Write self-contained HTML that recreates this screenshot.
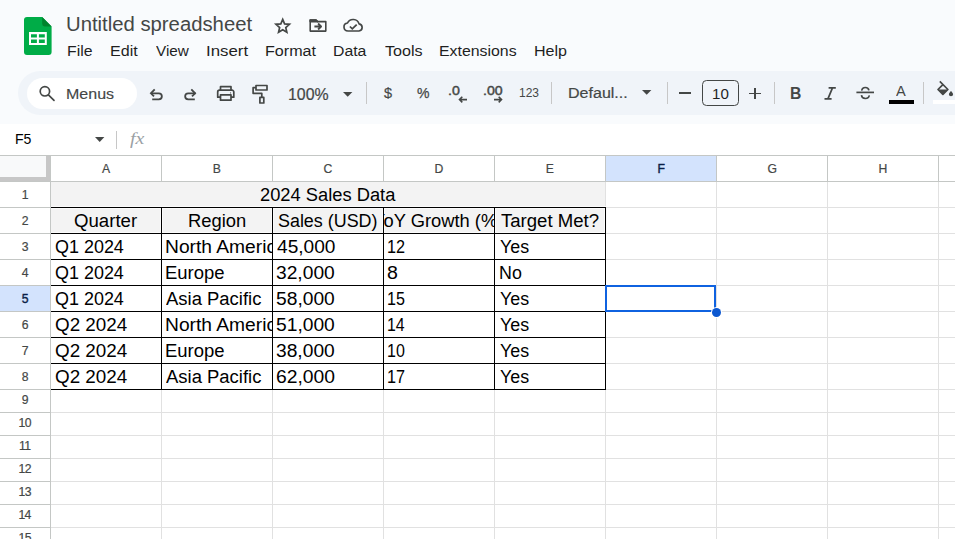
<!DOCTYPE html><html><head><meta charset="utf-8"><title>Untitled spreadsheet</title>
<style>html,body{margin:0;padding:0;}body{width:955px;height:539px;overflow:hidden;position:relative;background:#f9fbfd;font-family:"Liberation Sans", sans-serif;}div{box-sizing:border-box;}svg{position:absolute;overflow:visible;}</style></head><body>
<svg style="left:24px;top:17px" width="28" height="38" viewBox="0 0 28 38">
<path d="M3 0 H18.2 L27.6 9.4 V35 a3 3 0 0 1 -3 3 H3 a3 3 0 0 1 -3 -3 V3 a3 3 0 0 1 3 -3 Z" fill="#00ac47"/>
<path d="M18.2 0 L27.6 9.4 H20.6 a2.4 2.4 0 0 1 -2.4 -2.4 Z" fill="#00832d"/>
<path d="M5.0 15.1 H22.8 V28.0 H5.0 Z M7.0 17.2 V20.4 H12.9 V17.2 Z M14.9 17.2 V20.4 H20.8 V17.2 Z M7.0 22.5 V25.9 H12.9 V22.5 Z M14.9 22.5 V25.9 H20.8 V22.5 Z" fill="#ffffff" fill-rule="evenodd"/>
</svg>
<div style="position:absolute;top:15px;font-size:19.4px;line-height:19.4px;color:#444746;white-space:nowrap;left:66.04px;transform-origin:0 0;transform:scaleX(1.0464);">Untitled spreadsheet</div>
<svg style="left:272.6px;top:15.6px" width="19.8" height="19.8" viewBox="0 0 21 21" fill="none" stroke="#444746" stroke-width="1.8" stroke-linejoin="miter"><path d="M10.3 3.6 l2.0 4.75 5.15 .45 -3.9 3.4 1.15 5.05 -4.4 -2.65 -4.4 2.65 1.15 -5.05 -3.9 -3.4 5.15 -.45 Z"/></svg>
<svg style="left:308px;top:17px" width="20" height="16" viewBox="0 0 20 16" fill="none" stroke="#444746" stroke-width="1.6" stroke-linejoin="round" stroke-linecap="butt"><path d="M2.2 4.2 V3 H8 L9.6 4.6 H17.8 V14.1 H2.2 Z"/><path d="M2.2 3 H8 L9.6 4.6 H2.2Z" fill="#444746"/><path d="M6.4 9.5 H12.6 M10.1 6.5 L13.1 9.5 10.1 12.5" stroke-width="1.8"/></svg>
<svg style="left:342px;top:17.4px" width="22.9" height="16" viewBox="0 0 22 16" preserveAspectRatio="none" fill="none" stroke="#444746" stroke-width="1.6" stroke-linejoin="round" stroke-linecap="round"><path d="M5.8 14 a4 4 0 0 1 -.5 -7.95 A5.9 5.9 0 0 1 16.4 6.9 3.6 3.6 0 0 1 16.3 14 Z"/><path d="M7.6 9.5 l2.3 2.3 4.2 -4.2" stroke-width="1.7" stroke-linecap="butt" stroke-linejoin="miter"/></svg>
<div style="position:absolute;top:43px;font-size:15.1px;line-height:15.1px;color:#1f1f1f;white-space:nowrap;left:67.40px;transform-origin:0 0;transform:scaleX(1.0480);">File</div>
<div style="position:absolute;top:43px;font-size:15.1px;line-height:15.1px;color:#1f1f1f;white-space:nowrap;left:109.78px;transform-origin:0 0;transform:scaleX(1.0659);">Edit</div>
<div style="position:absolute;top:43px;font-size:15.1px;line-height:15.1px;color:#1f1f1f;white-space:nowrap;left:155.74px;transform-origin:0 0;transform:scaleX(1.0113);">View</div>
<div style="position:absolute;top:43px;font-size:15.1px;line-height:15.1px;color:#1f1f1f;white-space:nowrap;left:205.65px;transform-origin:0 0;transform:scaleX(1.1139);">Insert</div>
<div style="position:absolute;top:43px;font-size:15.1px;line-height:15.1px;color:#1f1f1f;white-space:nowrap;left:264.78px;transform-origin:0 0;transform:scaleX(1.0672);">Format</div>
<div style="position:absolute;top:43px;font-size:15.1px;line-height:15.1px;color:#1f1f1f;white-space:nowrap;left:333.30px;transform-origin:0 0;transform:scaleX(1.0467);">Data</div>
<div style="position:absolute;top:43px;font-size:15.1px;line-height:15.1px;color:#1f1f1f;white-space:nowrap;left:385.05px;transform-origin:0 0;transform:scaleX(1.0679);">Tools</div>
<div style="position:absolute;top:43px;font-size:15.1px;line-height:15.1px;color:#1f1f1f;white-space:nowrap;left:439.10px;transform-origin:0 0;transform:scaleX(1.0515);">Extensions</div>
<div style="position:absolute;top:43px;font-size:15.1px;line-height:15.1px;color:#1f1f1f;white-space:nowrap;left:533.98px;transform-origin:0 0;transform:scaleX(1.0649);">Help</div>
<div style="position:absolute;left:18px;top:71px;width:960px;height:44px;background:#f0f4f9;border-radius:22px;"></div>
<div style="position:absolute;left:27px;top:78px;width:110px;height:31px;background:#ffffff;border-radius:15.5px;"></div>
<svg style="left:38px;top:84px" width="18" height="18" viewBox="0 0 18 18" fill="none" stroke="#444746" stroke-width="1.7" stroke-linecap="round"><circle cx="6.9" cy="7.3" r="4.7"/><path d="M10.4 10.8 L16 16.3"/></svg>
<div style="position:absolute;top:86px;font-size:15.1px;line-height:15.1px;color:#444746;white-space:nowrap;left:66.39px;transform-origin:0 0;transform:scaleX(1.0613);-webkit-text-stroke:0.15px #444746;">Menus</div>
<svg style="left:148px;top:86px" width="18" height="16" viewBox="0 0 18 16" fill="none" stroke="#444746" stroke-width="1.8" stroke-linejoin="miter"><path d="M4.2 13.4 H10.8 a3.05 3.05 0 0 0 0 -6.1 H3.4"/><path d="M6.7 3.3 L2.9 7.3 6.0 10.4"/></svg>
<svg style="left:182px;top:86px" width="18" height="16" viewBox="0 0 18 16" fill="none" stroke="#444746" stroke-width="1.8" stroke-linejoin="miter"><path d="M12.8 13.4 H6.2 a3.05 3.05 0 0 1 0 -6.1 H13.6"/><path d="M9.3 3.3 L13.1 7.3 10.0 10.4"/></svg>
<svg style="left:216px;top:85px" width="20" height="17" viewBox="0 0 20 17" fill="none" stroke="#444746" stroke-width="1.7" stroke-linejoin="round"><path d="M4.5 5.2 V1.7 H15 V5.2"/><path d="M4.5 12.2 H1.7 V7 a1.8 1.8 0 0 1 1.8 -1.8 H16 a1.8 1.8 0 0 1 1.8 1.8 V12.2 H15"/><path d="M4.5 9.8 H15 V15.2 H4.5 Z"/><circle cx="14.6" cy="7.9" r=".55" fill="#444746" stroke="none"/></svg>
<svg style="left:251px;top:84px" width="18" height="21" viewBox="0 0 18 21" fill="none" stroke="#444746" stroke-width="1.7" stroke-linejoin="round"><path d="M5.0 1.5 H16.0 V6.0 H5.0 Z"/><path d="M5.0 3.7 H2.1 V9.3 H10.8 V13"/><path d="M8.9 13.4 H12.8 V19.0 H8.9 Z"/></svg>
<div style="position:absolute;top:87px;font-size:15.7px;line-height:15.7px;color:#444746;white-space:nowrap;left:287.79px;transform-origin:0 0;transform:scaleX(1.0130);-webkit-text-stroke:0.2px #444746;">100%</div>
<svg style="left:342.70px;top:91.60px" width="9.4" height="4.8" viewBox="0 0 9.4 4.8"><path d="M0 0 H9.4 L4.7 4.8 Z" fill="#444746"/></svg>
<div style="position:absolute;left:366px;top:82px;width:1px;height:22px;background:#c7c7c7;"></div>
<div style="position:absolute;left:551px;top:82px;width:1px;height:22px;background:#c7c7c7;"></div>
<div style="position:absolute;left:667px;top:82px;width:1px;height:22px;background:#c7c7c7;"></div>
<div style="position:absolute;left:774px;top:82px;width:1px;height:22px;background:#c7c7c7;"></div>
<div style="position:absolute;left:923px;top:82px;width:1px;height:22px;background:#c7c7c7;"></div>
<div style="position:absolute;top:86px;font-size:14.4px;line-height:14.4px;color:#444746;white-space:nowrap;left:384.05px;transform-origin:0 0;transform:scaleX(1.0070);-webkit-text-stroke:0.18px #444746;">$</div>
<div style="position:absolute;top:86px;font-size:14.2px;line-height:14.2px;color:#444746;white-space:nowrap;left:416.81px;transform-origin:0 0;transform:scaleX(0.9888);-webkit-text-stroke:0.25px #444746;">%</div>
<div style="position:absolute;top:84px;font-size:13.6px;line-height:13.6px;color:#444746;white-space:nowrap;left:448.01px;transform-origin:0 0;transform:scaleX(1.0430);-webkit-text-stroke:0.45px #444746;">.0</div>
<svg style="left:458px;top:95.5px" width="10" height="7" viewBox="0 0 10 7" fill="none" stroke="#444746" stroke-width="1.6"><path d="M9 3.6 H1.6 M4.3 .8 L1.5 3.6 4.3 6.4"/></svg>
<div style="position:absolute;top:84px;font-size:13.6px;line-height:13.6px;color:#444746;white-space:nowrap;left:482.92px;transform-origin:0 0;transform:scaleX(1.0379);-webkit-text-stroke:0.45px #444746;">.00</div>
<svg style="left:492.5px;top:95.5px" width="10" height="7" viewBox="0 0 10 7" fill="none" stroke="#444746" stroke-width="1.6"><path d="M1 3.6 H8.4 M5.7 .8 L8.5 3.6 5.7 6.4"/></svg>
<div style="position:absolute;top:86px;font-size:13.4px;line-height:13.4px;color:#444746;white-space:nowrap;left:518.89px;transform-origin:0 0;transform:scaleX(0.8961);">123</div>
<div style="position:absolute;top:85px;font-size:15.2px;line-height:15.2px;color:#444746;white-space:nowrap;left:567.88px;transform-origin:0 0;transform:scaleX(1.0560);-webkit-text-stroke:0.2px #444746;">Defaul...</div>
<svg style="left:641.70px;top:90.10px" width="9.4" height="4.8" viewBox="0 0 9.4 4.8"><path d="M0 0 H9.4 L4.7 4.8 Z" fill="#444746"/></svg>
<div style="position:absolute;left:679.4px;top:92.4px;width:11.4px;height:1.5px;background:#444746;"></div>
<div style="position:absolute;left:702px;top:80px;width:37px;height:25.5px;border:1.1px solid #444746;border-radius:4.5px;"></div>
<div style="position:absolute;top:86px;font-size:15.2px;line-height:15.2px;color:#1f1f1f;white-space:nowrap;left:712.05px;transform-origin:0 0;transform:scaleX(0.9954);">10</div>
<div style="position:absolute;left:749.2px;top:92.6px;width:11.5px;height:1.7px;background:#444746;"></div>
<div style="position:absolute;left:754.1px;top:87.7px;width:1.7px;height:11.5px;background:#444746;"></div>
<div style="position:absolute;top:86px;font-size:15.8px;line-height:15.8px;color:#444746;white-space:nowrap;font-weight:bold;left:789.56px;transform-origin:0 0;transform:scaleX(0.9944);">B</div>
<svg style="left:824px;top:87px" width="13" height="13" viewBox="0 0 13 13" fill="none" stroke="#444746" stroke-width="1.7"><path d="M4.6 .9 H11.8 M.5 11.9 H7.6 M8.5 .9 L3.9 11.9"/></svg>
<svg style="left:856px;top:86px" width="19" height="14" viewBox="0 0 19 14" fill="none" stroke="#444746" stroke-width="1.7"><path d="M12.9 4.3 C12.6 2.3 11.2 1.5 9.3 1.5 C7.3 1.5 5.7 2.6 5.9 4.6"/><path d="M5.5 9.2 C5.7 11.3 7.2 12.5 9.4 12.5 C11.6 12.5 13.2 11.4 13.1 9.4"/><path d="M.4 6.4 H18"/></svg>
<div style="position:absolute;top:84px;font-size:14.4px;line-height:14.4px;color:#444746;white-space:nowrap;left:895.67px;transform-origin:0 0;transform:scaleX(1.0160);">A</div>
<div style="position:absolute;left:889px;top:100px;width:25.2px;height:3.8px;background:#000;"></div>
<svg style="left:936px;top:80px" width="19" height="17" viewBox="0 0 19 17"><path d="M3.8 1.4 L11.9 9.5 6.9 14.4 2.0 9.5 6.9 4.6" fill="none" stroke="#444746" stroke-width="1.7" stroke-linejoin="round" stroke-linecap="butt"/><path d="M2.0 9.5 H11.9 L6.9 14.4 Z" fill="#444746"/><path d="M15 11.1 c0 0 -2.1 2.2 -2.1 3.1 a2.1 2.1 0 0 0 4.2 0 c0 -.9 -2.1 -3.1 -2.1 -3.1 Z" fill="#444746"/></svg>
<div style="position:absolute;left:933px;top:100px;width:30px;height:3.8px;background:#fff;"></div>
<div style="position:absolute;left:0px;top:123.8px;width:955px;height:33px;background:#ffffff;"></div>
<div style="position:absolute;top:133px;font-size:13.8px;line-height:13.8px;color:#000;white-space:nowrap;left:14.75px;transform-origin:0 0;transform:scaleX(1.0203);">F5</div>
<svg style="left:94.50px;top:136.80px" width="9.4" height="5.0" viewBox="0 0 9.4 5.0"><path d="M0 0 H9.4 L4.7 5.0 Z" fill="#444746"/></svg>
<div style="position:absolute;left:116px;top:131px;width:1px;height:17.5px;background:#c7c7c7;"></div>
<div style="position:absolute;top:130px;font-size:17.5px;line-height:17.5px;color:#9a9fa4;white-space:nowrap;font-family:'Liberation Serif',serif;font-style:italic;left:129.98px;transform-origin:0 0;transform:scaleX(1.1364);">fx</div>
<div style="position:absolute;left:0px;top:155px;width:955px;height:384px;background:#ffffff;"></div>
<div style="position:absolute;left:606px;top:156px;width:110px;height:25px;background:#d3e3fd;"></div>
<div style="position:absolute;left:0px;top:286px;width:50px;height:25px;background:#d3e3fd;"></div>
<div style="position:absolute;left:0px;top:156px;width:46px;height:21px;background:#f8f9fa;"></div>
<div style="position:absolute;left:46px;top:156px;width:4px;height:25px;background:#c7c7c7;"></div>
<div style="position:absolute;left:0px;top:177px;width:50px;height:4px;background:#c7c7c7;"></div>
<div style="position:absolute;left:0px;top:155px;width:955px;height:1px;background:#c4c7c5;"></div>
<div style="position:absolute;left:0px;top:181px;width:955px;height:1px;background:#c4c7c5;"></div>
<div style="position:absolute;left:50px;top:155px;width:1px;height:27px;background:#c4c7c5;"></div>
<div style="position:absolute;left:161px;top:155px;width:1px;height:27px;background:#c4c7c5;"></div>
<div style="position:absolute;left:272px;top:155px;width:1px;height:27px;background:#c4c7c5;"></div>
<div style="position:absolute;left:383px;top:155px;width:1px;height:27px;background:#c4c7c5;"></div>
<div style="position:absolute;left:494px;top:155px;width:1px;height:27px;background:#c4c7c5;"></div>
<div style="position:absolute;left:605px;top:155px;width:1px;height:27px;background:#c4c7c5;"></div>
<div style="position:absolute;left:716px;top:155px;width:1px;height:27px;background:#c4c7c5;"></div>
<div style="position:absolute;left:827px;top:155px;width:1px;height:27px;background:#c4c7c5;"></div>
<div style="position:absolute;left:938px;top:155px;width:1px;height:27px;background:#c4c7c5;"></div>
<div style="position:absolute;left:50px;top:155px;width:1px;height:384px;background:#c4c7c5;"></div>
<div style="position:absolute;left:0px;top:181px;width:50px;height:1px;background:#c4c7c5;"></div>
<div style="position:absolute;left:0px;top:207px;width:50px;height:1px;background:#c4c7c5;"></div>
<div style="position:absolute;left:0px;top:233px;width:50px;height:1px;background:#c4c7c5;"></div>
<div style="position:absolute;left:0px;top:259px;width:50px;height:1px;background:#c4c7c5;"></div>
<div style="position:absolute;left:0px;top:285px;width:50px;height:1px;background:#c4c7c5;"></div>
<div style="position:absolute;left:0px;top:311px;width:50px;height:1px;background:#c4c7c5;"></div>
<div style="position:absolute;left:0px;top:337px;width:50px;height:1px;background:#c4c7c5;"></div>
<div style="position:absolute;left:0px;top:363px;width:50px;height:1px;background:#c4c7c5;"></div>
<div style="position:absolute;left:0px;top:389px;width:50px;height:1px;background:#c4c7c5;"></div>
<div style="position:absolute;left:0px;top:412px;width:50px;height:1px;background:#c4c7c5;"></div>
<div style="position:absolute;left:0px;top:435px;width:50px;height:1px;background:#c4c7c5;"></div>
<div style="position:absolute;left:0px;top:458px;width:50px;height:1px;background:#c4c7c5;"></div>
<div style="position:absolute;left:0px;top:481px;width:50px;height:1px;background:#c4c7c5;"></div>
<div style="position:absolute;left:0px;top:504px;width:50px;height:1px;background:#c4c7c5;"></div>
<div style="position:absolute;left:0px;top:527px;width:50px;height:1px;background:#c4c7c5;"></div>
<div style="position:absolute;left:51px;top:207px;width:904px;height:1px;background:#e1e1e1;"></div>
<div style="position:absolute;left:51px;top:233px;width:904px;height:1px;background:#e1e1e1;"></div>
<div style="position:absolute;left:51px;top:259px;width:904px;height:1px;background:#e1e1e1;"></div>
<div style="position:absolute;left:51px;top:285px;width:904px;height:1px;background:#e1e1e1;"></div>
<div style="position:absolute;left:51px;top:311px;width:904px;height:1px;background:#e1e1e1;"></div>
<div style="position:absolute;left:51px;top:337px;width:904px;height:1px;background:#e1e1e1;"></div>
<div style="position:absolute;left:51px;top:363px;width:904px;height:1px;background:#e1e1e1;"></div>
<div style="position:absolute;left:51px;top:389px;width:904px;height:1px;background:#e1e1e1;"></div>
<div style="position:absolute;left:51px;top:412px;width:904px;height:1px;background:#e1e1e1;"></div>
<div style="position:absolute;left:51px;top:435px;width:904px;height:1px;background:#e1e1e1;"></div>
<div style="position:absolute;left:51px;top:458px;width:904px;height:1px;background:#e1e1e1;"></div>
<div style="position:absolute;left:51px;top:481px;width:904px;height:1px;background:#e1e1e1;"></div>
<div style="position:absolute;left:51px;top:504px;width:904px;height:1px;background:#e1e1e1;"></div>
<div style="position:absolute;left:51px;top:527px;width:904px;height:1px;background:#e1e1e1;"></div>
<div style="position:absolute;left:161px;top:182px;width:1px;height:357px;background:#e1e1e1;"></div>
<div style="position:absolute;left:272px;top:182px;width:1px;height:357px;background:#e1e1e1;"></div>
<div style="position:absolute;left:383px;top:182px;width:1px;height:357px;background:#e1e1e1;"></div>
<div style="position:absolute;left:494px;top:182px;width:1px;height:357px;background:#e1e1e1;"></div>
<div style="position:absolute;left:605px;top:182px;width:1px;height:357px;background:#e1e1e1;"></div>
<div style="position:absolute;left:716px;top:182px;width:1px;height:357px;background:#e1e1e1;"></div>
<div style="position:absolute;left:827px;top:182px;width:1px;height:357px;background:#e1e1e1;"></div>
<div style="position:absolute;left:938px;top:182px;width:1px;height:357px;background:#e1e1e1;"></div>
<div style="position:absolute;left:51px;top:182px;width:554px;height:25px;background:#f3f3f3;"></div>
<div style="position:absolute;left:51px;top:208px;width:554px;height:25px;background:#f3f3f3;"></div>
<div style="position:absolute;top:163px;font-size:12.2px;line-height:12.2px;color:#444746;white-space:nowrap;left:101.93px;-webkit-text-stroke:0.2px #444746;">A</div>
<div style="position:absolute;top:163px;font-size:12.2px;line-height:12.2px;color:#444746;white-space:nowrap;left:212.75px;-webkit-text-stroke:0.2px #444746;">B</div>
<div style="position:absolute;top:163px;font-size:12.2px;line-height:12.2px;color:#444746;white-space:nowrap;left:323.52px;-webkit-text-stroke:0.2px #444746;">C</div>
<div style="position:absolute;top:163px;font-size:12.2px;line-height:12.2px;color:#444746;white-space:nowrap;left:434.38px;-webkit-text-stroke:0.2px #444746;">D</div>
<div style="position:absolute;top:163px;font-size:12.2px;line-height:12.2px;color:#444746;white-space:nowrap;left:545.69px;-webkit-text-stroke:0.2px #444746;">E</div>
<div style="position:absolute;top:163px;font-size:12.2px;line-height:12.2px;color:#0b1f47;white-space:nowrap;left:657.42px;-webkit-text-stroke:0.4px #0b1f47;">F</div>
<div style="position:absolute;top:163px;font-size:12.2px;line-height:12.2px;color:#444746;white-space:nowrap;left:767.40px;-webkit-text-stroke:0.2px #444746;">G</div>
<div style="position:absolute;top:163px;font-size:12.2px;line-height:12.2px;color:#444746;white-space:nowrap;left:878.59px;-webkit-text-stroke:0.2px #444746;">H</div>
<div style="position:absolute;top:189px;font-size:12.2px;line-height:12.2px;color:#444746;white-space:nowrap;left:21.64px;-webkit-text-stroke:0.2px #444746;">1</div>
<div style="position:absolute;top:215px;font-size:12.2px;line-height:12.2px;color:#444746;white-space:nowrap;left:21.81px;-webkit-text-stroke:0.2px #444746;">2</div>
<div style="position:absolute;top:241px;font-size:12.2px;line-height:12.2px;color:#444746;white-space:nowrap;left:21.84px;-webkit-text-stroke:0.2px #444746;">3</div>
<div style="position:absolute;top:267px;font-size:12.2px;line-height:12.2px;color:#444746;white-space:nowrap;left:21.85px;-webkit-text-stroke:0.2px #444746;">4</div>
<div style="position:absolute;top:293px;font-size:12.2px;line-height:12.2px;color:#0b1f47;white-space:nowrap;left:21.81px;-webkit-text-stroke:0.4px #0b1f47;">5</div>
<div style="position:absolute;top:319px;font-size:12.2px;line-height:12.2px;color:#444746;white-space:nowrap;left:21.77px;-webkit-text-stroke:0.2px #444746;">6</div>
<div style="position:absolute;top:345px;font-size:12.2px;line-height:12.2px;color:#444746;white-space:nowrap;left:21.80px;-webkit-text-stroke:0.2px #444746;">7</div>
<div style="position:absolute;top:371px;font-size:12.2px;line-height:12.2px;color:#444746;white-space:nowrap;left:21.81px;-webkit-text-stroke:0.2px #444746;">8</div>
<div style="position:absolute;top:394px;font-size:12.2px;line-height:12.2px;color:#444746;white-space:nowrap;left:21.81px;-webkit-text-stroke:0.2px #444746;">9</div>
<div style="position:absolute;top:417px;font-size:12.2px;line-height:12.2px;color:#444746;white-space:nowrap;letter-spacing:-0.600px;left:18.48px;-webkit-text-stroke:0.2px #444746;">10</div>
<div style="position:absolute;top:440px;font-size:12.2px;line-height:12.2px;color:#444746;white-space:nowrap;letter-spacing:-0.600px;left:19.00px;-webkit-text-stroke:0.2px #444746;">11</div>
<div style="position:absolute;top:463px;font-size:12.2px;line-height:12.2px;color:#444746;white-space:nowrap;letter-spacing:-0.600px;left:18.56px;-webkit-text-stroke:0.2px #444746;">12</div>
<div style="position:absolute;top:486px;font-size:12.2px;line-height:12.2px;color:#444746;white-space:nowrap;letter-spacing:-0.600px;left:18.52px;-webkit-text-stroke:0.2px #444746;">13</div>
<div style="position:absolute;top:509px;font-size:12.2px;line-height:12.2px;color:#444746;white-space:nowrap;letter-spacing:-0.600px;left:18.43px;-webkit-text-stroke:0.2px #444746;">14</div>
<div style="position:absolute;top:532px;font-size:12.2px;line-height:12.2px;color:#444746;white-space:nowrap;letter-spacing:-0.600px;left:18.50px;-webkit-text-stroke:0.2px #444746;">15</div>
<div style="position:absolute;left:51px;top:206px;width:555px;height:1px;background:#fbfbfb;"></div>
<div style="position:absolute;left:51px;top:208px;width:555px;height:1px;background:#fbfbfb;"></div>
<div style="position:absolute;left:51px;top:232px;width:555px;height:1px;background:#fbfbfb;"></div>
<div style="position:absolute;left:160px;top:208px;width:1px;height:25px;background:#fbfbfb;"></div>
<div style="position:absolute;left:162px;top:208px;width:1px;height:25px;background:#fbfbfb;"></div>
<div style="position:absolute;left:271px;top:208px;width:1px;height:25px;background:#fbfbfb;"></div>
<div style="position:absolute;left:273px;top:208px;width:1px;height:25px;background:#fbfbfb;"></div>
<div style="position:absolute;left:382px;top:208px;width:1px;height:25px;background:#fbfbfb;"></div>
<div style="position:absolute;left:384px;top:208px;width:1px;height:25px;background:#fbfbfb;"></div>
<div style="position:absolute;left:493px;top:208px;width:1px;height:25px;background:#fbfbfb;"></div>
<div style="position:absolute;left:495px;top:208px;width:1px;height:25px;background:#fbfbfb;"></div>
<div style="position:absolute;left:604px;top:208px;width:1px;height:25px;background:#fbfbfb;"></div>
<div style="position:absolute;left:606px;top:208px;width:1px;height:25px;background:#fbfbfb;"></div>
<div style="position:absolute;left:51px;top:207px;width:555px;height:1px;background:#000;"></div>
<div style="position:absolute;left:51px;top:233px;width:555px;height:1px;background:#000;"></div>
<div style="position:absolute;left:51px;top:259px;width:555px;height:1px;background:#000;"></div>
<div style="position:absolute;left:51px;top:285px;width:555px;height:1px;background:#000;"></div>
<div style="position:absolute;left:51px;top:311px;width:555px;height:1px;background:#000;"></div>
<div style="position:absolute;left:51px;top:337px;width:555px;height:1px;background:#000;"></div>
<div style="position:absolute;left:51px;top:363px;width:555px;height:1px;background:#000;"></div>
<div style="position:absolute;left:51px;top:389px;width:555px;height:1px;background:#000;"></div>
<div style="position:absolute;left:161px;top:207px;width:1px;height:183px;background:#000;"></div>
<div style="position:absolute;left:272px;top:207px;width:1px;height:183px;background:#000;"></div>
<div style="position:absolute;left:383px;top:207px;width:1px;height:183px;background:#000;"></div>
<div style="position:absolute;left:494px;top:207px;width:1px;height:183px;background:#000;"></div>
<div style="position:absolute;left:605px;top:207px;width:1px;height:183px;background:#000;"></div>
<div style="position:absolute;top:187px;font-size:17.6px;line-height:17.6px;color:#000;white-space:nowrap;left:259.88px;transform-origin:0 0;transform:scaleX(1.0404);">2024 Sales Data</div>
<div style="position:absolute;top:213px;font-size:17.6px;line-height:17.6px;color:#000;white-space:nowrap;left:74.22px;transform-origin:0 0;transform:scaleX(1.0588);">Quarter</div>
<div style="position:absolute;top:213px;font-size:17.6px;line-height:17.6px;color:#000;white-space:nowrap;left:187.89px;transform-origin:0 0;transform:scaleX(1.0450);">Region</div>
<div style="position:absolute;top:213px;font-size:17.6px;line-height:17.6px;color:#000;white-space:nowrap;left:277.99px;transform-origin:0 0;transform:scaleX(1.0175);">Sales (USD)</div>
<div style="position:absolute;left:384px;top:208px;width:110px;height:25px;overflow:hidden;">
<div style="position:absolute;top:5px;font-size:17.6px;line-height:17.6px;color:#000;white-space:nowrap;left:-11.33px;transform-origin:0 0;transform:scaleX(1.0411);">YoY Growth (%)</div>
</div>
<div style="position:absolute;top:213px;font-size:17.6px;line-height:17.6px;color:#000;white-space:nowrap;left:500.89px;transform-origin:0 0;transform:scaleX(1.0554);">Target Met?</div>
<div style="position:absolute;top:239px;font-size:17.6px;line-height:17.6px;color:#000;white-space:nowrap;left:54.56px;transform-origin:0 0;transform:scaleX(1.0200);">Q1 2024</div>
<div style="position:absolute;left:162px;top:234px;width:110px;height:25px;overflow:hidden;">
<div style="position:absolute;top:5px;font-size:17.6px;line-height:17.6px;color:#000;white-space:nowrap;left:2.82px;transform-origin:0 0;transform:scaleX(1.0921);">North America</div>
</div>
<div style="position:absolute;top:239px;font-size:17.6px;line-height:17.6px;color:#000;white-space:nowrap;left:276.78px;transform-origin:0 0;transform:scaleX(1.0860);">45,000</div>
<div style="position:absolute;top:239px;font-size:17.6px;line-height:17.6px;color:#000;white-space:nowrap;left:386.67px;transform-origin:0 0;transform:scaleX(0.9220);">12</div>
<div style="position:absolute;top:239px;font-size:17.6px;line-height:17.6px;color:#000;white-space:nowrap;left:499.71px;transform-origin:0 0;transform:scaleX(1.0150);">Yes</div>
<div style="position:absolute;top:265px;font-size:17.6px;line-height:17.6px;color:#000;white-space:nowrap;left:54.56px;transform-origin:0 0;transform:scaleX(1.0200);">Q1 2024</div>
<div style="position:absolute;top:265px;font-size:17.6px;line-height:17.6px;color:#000;white-space:nowrap;left:164.88px;transform-origin:0 0;transform:scaleX(1.0509);">Europe</div>
<div style="position:absolute;top:265px;font-size:17.6px;line-height:17.6px;color:#000;white-space:nowrap;left:276.47px;transform-origin:0 0;transform:scaleX(1.0918);">32,000</div>
<div style="position:absolute;top:265px;font-size:17.6px;line-height:17.6px;color:#000;white-space:nowrap;left:387.16px;transform-origin:0 0;transform:scaleX(1.1122);">8</div>
<div style="position:absolute;top:265px;font-size:17.6px;line-height:17.6px;color:#000;white-space:nowrap;left:499.14px;transform-origin:0 0;transform:scaleX(1.0134);">No</div>
<div style="position:absolute;top:291px;font-size:17.6px;line-height:17.6px;color:#000;white-space:nowrap;left:54.56px;transform-origin:0 0;transform:scaleX(1.0200);">Q1 2024</div>
<div style="position:absolute;top:291px;font-size:17.6px;line-height:17.6px;color:#000;white-space:nowrap;left:166.36px;transform-origin:0 0;transform:scaleX(1.0490);">Asia Pacific</div>
<div style="position:absolute;top:291px;font-size:17.6px;line-height:17.6px;color:#000;white-space:nowrap;left:276.43px;transform-origin:0 0;transform:scaleX(1.0925);">58,000</div>
<div style="position:absolute;top:291px;font-size:17.6px;line-height:17.6px;color:#000;white-space:nowrap;left:386.68px;transform-origin:0 0;transform:scaleX(0.9137);">15</div>
<div style="position:absolute;top:291px;font-size:17.6px;line-height:17.6px;color:#000;white-space:nowrap;left:499.71px;transform-origin:0 0;transform:scaleX(1.0150);">Yes</div>
<div style="position:absolute;top:317px;font-size:17.6px;line-height:17.6px;color:#000;white-space:nowrap;left:54.52px;transform-origin:0 0;transform:scaleX(1.0699);">Q2 2024</div>
<div style="position:absolute;left:162px;top:312px;width:110px;height:25px;overflow:hidden;">
<div style="position:absolute;top:5px;font-size:17.6px;line-height:17.6px;color:#000;white-space:nowrap;left:2.82px;transform-origin:0 0;transform:scaleX(1.0921);">North America</div>
</div>
<div style="position:absolute;top:317px;font-size:17.6px;line-height:17.6px;color:#000;white-space:nowrap;left:276.43px;transform-origin:0 0;transform:scaleX(1.0925);">51,000</div>
<div style="position:absolute;top:317px;font-size:17.6px;line-height:17.6px;color:#000;white-space:nowrap;left:386.69px;transform-origin:0 0;transform:scaleX(0.9028);">14</div>
<div style="position:absolute;top:317px;font-size:17.6px;line-height:17.6px;color:#000;white-space:nowrap;left:499.71px;transform-origin:0 0;transform:scaleX(1.0150);">Yes</div>
<div style="position:absolute;top:343px;font-size:17.6px;line-height:17.6px;color:#000;white-space:nowrap;left:54.52px;transform-origin:0 0;transform:scaleX(1.0699);">Q2 2024</div>
<div style="position:absolute;top:343px;font-size:17.6px;line-height:17.6px;color:#000;white-space:nowrap;left:164.88px;transform-origin:0 0;transform:scaleX(1.0509);">Europe</div>
<div style="position:absolute;top:343px;font-size:17.6px;line-height:17.6px;color:#000;white-space:nowrap;left:276.47px;transform-origin:0 0;transform:scaleX(1.0918);">38,000</div>
<div style="position:absolute;top:343px;font-size:17.6px;line-height:17.6px;color:#000;white-space:nowrap;left:386.68px;transform-origin:0 0;transform:scaleX(0.9109);">10</div>
<div style="position:absolute;top:343px;font-size:17.6px;line-height:17.6px;color:#000;white-space:nowrap;left:499.71px;transform-origin:0 0;transform:scaleX(1.0150);">Yes</div>
<div style="position:absolute;top:369px;font-size:17.6px;line-height:17.6px;color:#000;white-space:nowrap;left:54.52px;transform-origin:0 0;transform:scaleX(1.0699);">Q2 2024</div>
<div style="position:absolute;top:369px;font-size:17.6px;line-height:17.6px;color:#000;white-space:nowrap;left:166.36px;transform-origin:0 0;transform:scaleX(1.0490);">Asia Pacific</div>
<div style="position:absolute;top:369px;font-size:17.6px;line-height:17.6px;color:#000;white-space:nowrap;left:276.24px;transform-origin:0 0;transform:scaleX(1.0962);">62,000</div>
<div style="position:absolute;top:369px;font-size:17.6px;line-height:17.6px;color:#000;white-space:nowrap;left:386.67px;transform-origin:0 0;transform:scaleX(0.9220);">17</div>
<div style="position:absolute;top:369px;font-size:17.6px;line-height:17.6px;color:#000;white-space:nowrap;left:499.71px;transform-origin:0 0;transform:scaleX(1.0150);">Yes</div>
<div style="position:absolute;left:605px;top:285px;width:111px;height:27px;border:2px solid #0f62e0;"></div>
<div style="position:absolute;left:712px;top:308px;width:9px;height:9px;border-radius:50%;background:#0b57d0;box-shadow:0 0 0 1px #fff;"></div>
</body></html>
